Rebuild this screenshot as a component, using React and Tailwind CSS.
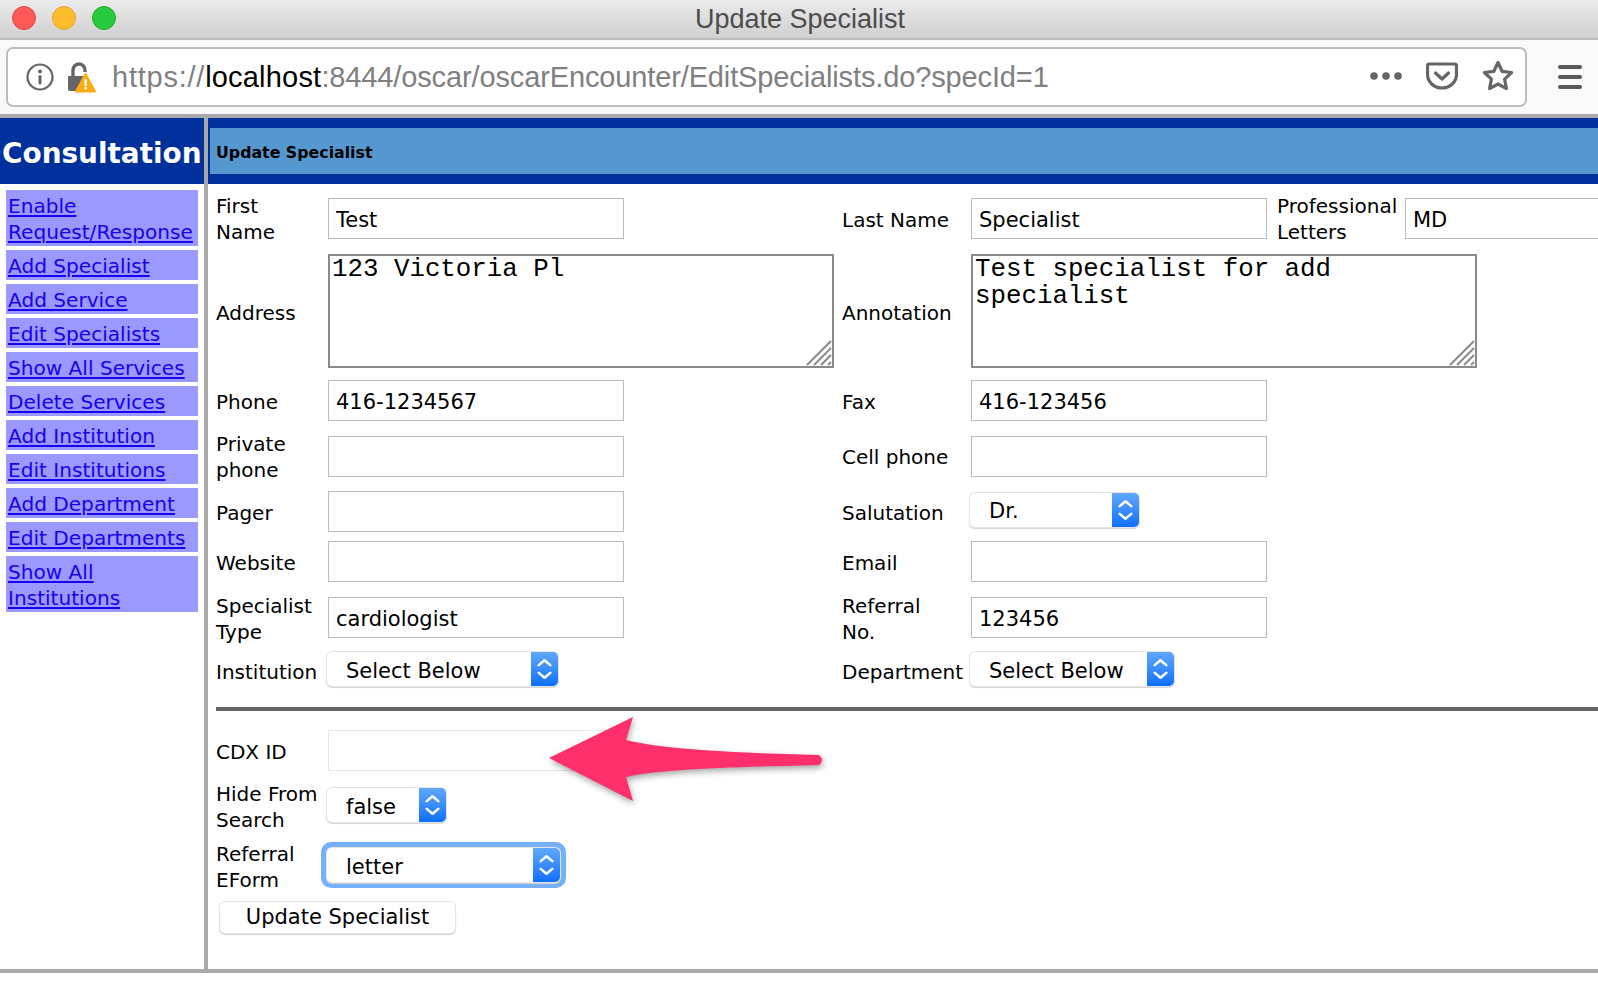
// App.jsx
const COLS = "grid grid-cols-[112px_514px_129px_306px_128px_1fr] grid-rows-[100%] items-center";
const LABEL = "whitespace-nowrap pt-[2px] text-[20px] leading-[26px] text-black";
const INPUT = "h-[41px] w-[296px] border border-[#bababa] bg-white px-[7px] pt-[2px] text-[21px] text-black outline-none";
const TEXTAREA = "block h-[114px] w-[506px] resize-none border-2 border-[#8a8a8a] bg-white px-[2px] py-0 font-['Liberation_Mono',monospace] text-[25.8px] leading-[27px] text-black outline-none";

const LINKS = [
    "Enable Request/Response",
    "Add Specialist",
    "Add Service",
    "Edit Specialists",
    "Show All Services",
    "Delete Services",
    "Add Institution",
    "Edit Institutions",
    "Add Department",
    "Edit Departments",
    "Show All Institutions",
];

function Chevrons() {
    return (
        <svg viewBox="0 0 28 34" className="h-full w-full" fill="none" stroke="white" strokeWidth="2.6" strokeLinecap="round" strokeLinejoin="round">
            <path d="M8 13l6-5 6 5" />
            <path d="M8 21l6 5 6-5" />
        </svg>
    );
}

function MacSelect({ value, width }) {
    return (
        <div className={`relative h-[34px] ${width} rounded-[5px] bg-white shadow-[0_0_0_1px_#e4e4e4,0_1px_1px_1px_#d4d4d4]`}>
            <select
                defaultValue={value}
                className="h-full w-full appearance-none bg-transparent pl-[19px] pt-[3px] font-['DejaVu_Sans',sans-serif] text-[21px] leading-[30px] text-black outline-none"
            >
                <option>{value}</option>
            </select>
            <div className="pointer-events-none absolute right-0 top-0 h-[34px] w-[27px] rounded-r-[5px] bg-gradient-to-b from-[#5fa8fb] to-[#0a6efd]">
                <Chevrons />
            </div>
        </div>
    );
}

function Row({ className = "", children }) {
    return <div className={`${COLS} ${className}`}>{children}</div>;
}

function Resizer() {
    return (
        <svg viewBox="0 0 26 26" className="pointer-events-none absolute bottom-[2px] right-[2px] h-[26px] w-[26px]" stroke="#8a8a8a" strokeWidth="2">
            <path d="M1 25L25 1M8 25L25 8M15 25L25 15M22 25L25 22" />
        </svg>
    );
}

function Area({ value }) {
    return (
        <div className="relative w-[506px]">
            <textarea readOnly value={value} className={TEXTAREA} />
            <Resizer />
        </div>
    );
}

function Field({ value = "", className = "" }) {
    return <input readOnly value={value} className={`${INPUT} ${className}`} />;
}

function Browser() {
    return (
        <>
            <div className="relative flex h-[40px] items-center justify-center border-b-2 border-[#bcbcbc] bg-gradient-to-b from-[#ebebeb] to-[#d0d0d0]">
                <div className="absolute left-[12px] top-[6px] flex gap-[16px]">
                    <div className="h-[24px] w-[24px] rounded-full border border-[#e0443e] bg-[#fc5b57]" />
                    <div className="h-[24px] w-[24px] rounded-full border border-[#dea034] bg-[#fdbc2e]" />
                    <div className="h-[24px] w-[24px] rounded-full border border-[#1aab29] bg-[#27c93f]" />
                </div>
                <span className="ml-[2px] mt-[1px] font-['Liberation_Sans',sans-serif] text-[27px] leading-none text-[#4d4d4d]">Update Specialist</span>
            </div>
            <div className="flex h-[74px] items-center bg-[#f9f9fa] pl-[6px]">
                <div className="flex h-[60px] w-[1521px] items-center rounded-[7px] border-2 border-[#bdbdbd] bg-white">
                    <svg viewBox="0 0 28 28" className="ml-[18px] h-[28px] w-[28px]" fill="none">
                        <circle cx="14" cy="14" r="12.5" stroke="#666" strokeWidth="2.2" />
                        <circle cx="14" cy="8.5" r="2" fill="#666" />
                        <rect x="12.5" y="12" width="3" height="9.5" rx="1.5" fill="#666" />
                    </svg>
                    <svg viewBox="0 0 30 32" className="ml-[12px] h-[32px] w-[30px]">
                        <path d="M2 15h15a2 2 0 0 1 2 2v13H4a2 2 0 0 1-2-2z" fill="#666" />
                        <path d="M7 15V9a6 6 0 0 1 12 0v2" fill="none" stroke="#666" strokeWidth="3.4" />
                        <path d="M19.5 13L29 30.5H10z" fill="#fcac10" stroke="#fcac10" strokeWidth="2" strokeLinejoin="round" />
                        <rect x="18.4" y="18" width="2.4" height="7" fill="#fff" />
                        <rect x="18.4" y="26" width="2.4" height="2.4" fill="#fff" />
                    </svg>
                    <div className="ml-[16px] flex-1 font-['Liberation_Sans',sans-serif] text-[29px] leading-none tracking-[-0.13px] text-[#808080]">
                        <span className="tracking-[0.76px]">https://</span>
                        <span className="tracking-[0.2px] text-black">localhost</span>
                        :8444/oscar/oscarEncounter/EditSpecialists.do?specId=1
                    </div>
                    <svg viewBox="0 0 32 8" className="h-[8px] w-[32px] -translate-y-[1px]" fill="#666">
                        <circle cx="4" cy="4" r="3.8" />
                        <circle cx="16" cy="4" r="3.8" />
                        <circle cx="28" cy="4" r="3.8" />
                    </svg>
                    <svg viewBox="0 0 32 28" className="ml-[24px] h-[28px] w-[32px] -translate-y-[1px]" fill="none" stroke="#666" strokeWidth="3.2" strokeLinecap="round" strokeLinejoin="round">
                        <path d="M3 2h26a1.5 1.5 0 0 1 1.5 1.5V12c0 8-6.5 14-14.5 14S1.500 20 1.500 12V3.500A1.500 1.500 0 0 1 3 2z" />
                        <path d="M9.500 11l6.500 6 6.500-6" />
                    </svg>
                    <svg viewBox="0 0 32 32" className="ml-[24px] h-[32px] w-[32px] -translate-y-[1px]" fill="none" stroke="#666" strokeWidth="3.2" strokeLinejoin="round">
                        <path d="M16 2.500l4.100 8.800 9.500 1.200-7 6.600 1.800 9.500L16 24l-8.400 4.600 1.800-9.500-7-6.600 9.500-1.200z" />
                    </svg>
                    <div className="w-[11px]" />
                </div>
                <div className="ml-[31px] flex w-[24px] flex-col gap-[6px]">
                    <div className="h-[4px] rounded-full bg-[#595959]" />
                    <div className="h-[4px] rounded-full bg-[#595959]" />
                    <div className="h-[4px] rounded-full bg-[#595959]" />
                </div>
            </div>
        </>
    );
}

function Sidebar() {
    return (
        <div className="w-[204px] shrink-0">
            <div className="flex h-[66px] items-center bg-[#00309c] pl-[2px] pt-[5px]">
                <span className="text-[27.9px] font-bold leading-none text-white">Consultation</span>
            </div>
            <div className="flex flex-col gap-[4px] pl-[6px] pr-[6px] pt-[6px]">
                {LINKS.map((link) => (
                    <div key={link} className="bg-[#9999ff] px-[2px] pb-[1px] pt-[3px] text-[20.1px] leading-[26px]">
                        <a href="#" className="text-[#1a00ee] underline">
                            {link}
                        </a>
                    </div>
                ))}
            </div>
        </div>
    );
}

export default function App() {
    return (
        <div className="h-[998px] w-[1598px] overflow-hidden bg-white font-['DejaVu_Sans',sans-serif]">
            <Browser />
            <div className="flex h-[859px] border-y-4 border-[#a9a9a9]">
                <Sidebar />
                <div className="w-[4px] shrink-0 bg-[#a9a9a9]" />
                <div className="relative min-w-0 flex-1 overflow-hidden">
                    <div className="h-[66px] bg-[#00309c] py-[10px] pl-[2px]">
                        <div className="flex h-[46px] items-center bg-[#5598d0] pl-[6px] pt-[3px] text-[15.8px] font-bold text-black">
                            Update Specialist
                        </div>
                    </div>
                    <div className="w-[1500px] pl-[8px] pt-[14px]">
                        <Row className="h-[41px]">
                            <div className={`${LABEL} -translate-y-[1px]`}>First<br />Name</div>
                            <Field value="Test" />
                            <div className={LABEL}>Last Name</div>
                            <Field value="Specialist" />
                            <div className={`${LABEL} -translate-y-[1px]`}>Professional<br />Letters</div>
                            <Field value="MD" />
                        </Row>
                        <Row className="mt-[15px] h-[114px]">
                            <div className={`${LABEL} translate-y-[1px]`}>Address</div>
                            <Area value="123 Victoria Pl" />
                            <div className={`${LABEL} translate-y-[1px]`}>Annotation</div>
                            <div className="col-span-3"><Area value="Test specialist for add specialist" /></div>
                        </Row>
                        <Row className="mt-[12px] h-[41px]">
                            <div className={LABEL}>Phone</div>
                            <Field value="416-1234567" />
                            <div className={LABEL}>Fax</div>
                            <Field value="416-123456" />
                        </Row>
                        <Row className="mt-[15px] h-[41px]">
                            <div className={`${LABEL} -translate-y-[1px]`}>Private<br />phone</div>
                            <Field />
                            <div className={`${LABEL} -translate-y-[1px]`}>Cell phone</div>
                            <Field />
                        </Row>
                        <Row className="mt-[14px] h-[41px]">
                            <div className={LABEL}>Pager</div>
                            <Field />
                            <div className={LABEL}>Salutation</div>
                            <MacSelect value="Dr." width="w-[169px] -translate-x-px -translate-y-[2px]" />
                        </Row>
                        <Row className="mt-[9px] h-[41px]">
                            <div className={LABEL}>Website</div>
                            <Field />
                            <div className={LABEL}>Email</div>
                            <Field />
                        </Row>
                        <Row className="mt-[15px] h-[41px]">
                            <div className={LABEL}>Specialist<br />Type</div>
                            <Field value="cardiologist" />
                            <div className={LABEL}>Referral<br />No.</div>
                            <Field value="123456" />
                        </Row>
                        <Row className="mt-[14px] h-[34px]">
                            <div className={`${LABEL} translate-y-[2px]`}>Institution</div>
                            <MacSelect value="Select Below" width="w-[231px] -translate-x-px" />
                            <div className={`${LABEL} translate-y-[2px]`}>Department</div>
                            <MacSelect value="Select Below" width="w-[204px] -translate-x-px" />
                        </Row>
                        <div className="mt-[21px] h-[4px] bg-[#666666]" />
                        <Row className="mt-[19px] h-[41px]">
                            <div className={LABEL}>CDX ID</div>
                            <Field className="border-[#e6e6e6]" />
                        </Row>
                        <Row className="mt-[17px] h-[34px]">
                            <div className={`${LABEL} translate-y-[1px]`}>Hide From<br />Search</div>
                            <MacSelect value="false" width="w-[119px] -translate-x-px" />
                        </Row>
                        <Row className="mt-[20px] h-[46px]">
                            <div className={`${LABEL} translate-y-[1px]`}>Referral<br />EForm</div>
                            <div className="-ml-[7px] w-[245px] rounded-[10px] border-[6px] border-[#74b0fb] p-0">
                                <MacSelect value="letter" width="w-full" />
                            </div>
                        </Row>
                        <button className="ml-[4px] mt-[14px] flex h-[31px] w-[235px] items-center justify-center rounded-[5px] bg-white text-[21px] text-black shadow-[0_0_0_1px_#e4e4e4,0_1px_1px_1px_#d4d4d4]">
                            Update Specialist
                        </button>
                    </div>
                    {/* red annotation arrow over the CDX field */}
                    <svg viewBox="0 0 290 100" className="pointer-events-none absolute left-[337px] top-[595px] h-[100px] w-[290px] overflow-visible" style={{ filter: "drop-shadow(1px 3px 3px rgba(0,0,0,0.35))" }}>
                        <path d="M4 45L88 4L81 27C120 37 200 40 274 42Q280 47 274 52C200 54 120 55 81 64L88 88z" fill="#fe2f6b" />
                    </svg>
                </div>
            </div>
        </div>
    );
}
